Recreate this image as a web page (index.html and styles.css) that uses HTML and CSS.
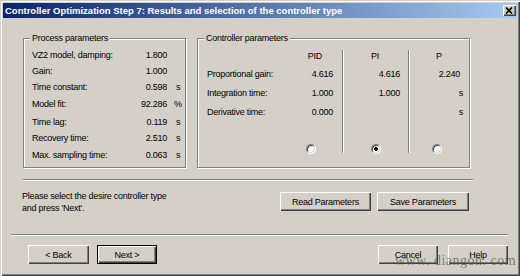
FILE: index.html
```html
<!DOCTYPE html>
<html>
<head>
<meta charset="utf-8">
<link rel="stylesheet" href="styles.css">
</head>
<body>
<div class="window">
  <div class="titlebar">
    <span class="title">Controller Optimization Step 7: Results and selection of the controller type</span>
    <span class="close"><svg width="8" height="7" viewBox="0 0 8 7"><path d="M1 0.5 L7 6.5 M7 0.5 L1 6.5" stroke="#000" stroke-width="1.6"/></svg></span>
  </div>
  <div class="content">
    <div class="groups">
      <div class="group process">
        <span class="group-title">Process parameters</span>
        <div class="pgrid">
          <span>VZ2 model, damping:</span><span class="val">1.800</span><span class="unit"></span>
          <span>Gain:</span><span class="val">1.000</span><span class="unit"></span>
          <span>Time constant:</span><span class="val">0.598</span><span class="unit">s</span>
          <span>Model fit:</span><span class="val">92.286</span><span class="unit">%</span>
          <span>Time lag:</span><span class="val">0.119</span><span class="unit">s</span>
          <span>Recovery time:</span><span class="val">2.510</span><span class="unit">s</span>
          <span>Max. sampling time:</span><span class="val">0.063</span><span class="unit">s</span>
        </div>
      </div>
      <div class="group controller">
        <span class="group-title">Controller parameters</span>
        <div class="cgrid">
          <span class="vsep s1"></span>
          <span class="vsep s2"></span>
          <span class="head c-pid">PID</span>
          <span class="head c-pi">PI</span>
          <span class="head c-p">P</span>

          <span class="lbl r2">Proportional gain:</span>
          <span class="v c-pid r2">4.616</span>
          <span class="v c-pi r2">4.616</span>
          <span class="v c-p r2">2.240</span>

          <span class="lbl r3">Integration time:</span>
          <span class="v c-pid r3">1.000</span>
          <span class="v c-pi r3">1.000</span>
          <span class="v c-p r3 u">s</span>

          <span class="lbl r4">Derivative time:</span>
          <span class="v c-pid r4">0.000</span>
          <span class="v c-p r4 u">s</span>

          <span class="radio c-pid rr"></span>
          <span class="radio checked c-pi rr"></span>
          <span class="radio c-p rr"></span>
        </div>
      </div>
    </div>
    <div class="sep sep1"></div>
    <div class="mid">
      <p class="hint">Please select the desire controller type<br>and press 'Next'.</p>
      <div class="midbtns">
        <button class="btn wide">Read Parameters</button>
        <button class="btn wide2">Save Parameters</button>
      </div>
    </div>
    <div class="sep sep2"></div>
    <div class="nav">
      <button class="btn back">&lt; Back</button>
      <button class="btn next">Next &gt;</button>
      <span class="spacer"></span>
      <button class="btn cancel">Cancel</button>
      <button class="btn help">Help</button>
    </div>
  </div>
  <div class="watermark">www. diangon. com</div>
</div>
</body>
</html>
```
FILE: styles.css
```css
* { box-sizing: border-box; }
body {
  margin: 0;
  background: #d4d0c8;
  font-family: "Liberation Sans", Arial, sans-serif;
  font-size: 9px;
  letter-spacing: -0.25px;
  color: #000;
}
.window {
  position: relative;
  width: 520px;
  height: 276px;
  padding: 3px;
  background: #d4d0c8;
  box-shadow: inset 1px 1px 0 #d4d0c8, inset 2px 2px 0 #fff, inset -1px -1px 0 #404040, inset -2px -2px 0 #808080;
  display: flex;
  flex-direction: column;
}
.titlebar {
  height: 15px;
  background: linear-gradient(to right, #0a246a, #a6caf0);
  display: flex;
  align-items: center;
  justify-content: space-between;
  padding: 0 1px 0 2px;
  color: #fff;
  font-weight: bold;
  font-size: 9.5px;
  letter-spacing: 0;
}
.title { white-space: nowrap; }
.close {
  width: 13px;
  height: 11px;
  background: #d4d0c8;
  box-shadow: inset 1px 1px 0 #fff, inset -1px -1px 0 #404040, inset -2px -2px 0 #808080;
  display: flex;
  align-items: center;
  justify-content: center;
}
.close svg { display: block; margin: -1px 1px 0 0; }
.content {
  flex: 1;
  padding: 20px 0 0 20px;
  display: flex;
  flex-direction: column;
}
.groups {
  display: flex;
  gap: 11px;
  height: 130px;
}
.group {
  height: 130px;
  border: 1px solid #808080;
  box-shadow: inset 1px 1px 0 #fff, 1px 1px 0 #fff;
}
.process { width: 163px; }
.controller { width: 273px; }
.group-title {
  display: block;
  width: max-content;
  margin: -7px 0 0 6px;
  padding: 0 2px;
  line-height: 12px;
  background: #d4d0c8;
}
.pgrid {
  margin-top: 3px;
  padding-left: 8px;
  display: grid;
  grid-template-columns: 1fr 44px 14px;
  grid-template-rows: 15.5px 16px 17px 17.5px 17px 16.5px 17px;
  align-items: center;
  line-height: 12px;
}
.pgrid .val { justify-self: end; padding-right: 4px; }
.pgrid .unit { justify-self: center; }
.cgrid {
  margin-top: 3px;
  padding-left: 9px;
  height: 108px;
  display: grid;
  grid-template-columns: 85px 46px 8px 58px 8px 54px;
  grid-template-rows: 17px 19px 19px 19px 1fr 12px;
  align-items: center;
  line-height: 12px;
}
.c-pid { grid-column: 2; }
.c-pi { grid-column: 4; }
.c-p { grid-column: 6; }
.head { grid-row: 1; justify-self: center; }
.lbl { grid-column: 1; }
.r2 { grid-row: 2; }
.r3 { grid-row: 3; }
.r4 { grid-row: 4; }
.rr { grid-row: 6; }
.v { justify-self: end; }
.v.c-pid { padding-right: 5px; }
.v.c-pi { padding-right: 4px; }
.v.c-p { padding-right: 6px; }
.v.u { padding-right: 3px; }
.vsep {
  grid-row: 1 / -1;
  align-self: stretch;
  justify-self: start;
  width: 2px;
  margin: 3px 0 2px 4px;
  border-left: 1px solid #808080;
  border-right: 1px solid #fff;
}
.s1 { grid-column: 3; }
.s2 { grid-column: 5; }
.radio {
  width: 10px;
  height: 10px;
  border-radius: 50%;
  justify-self: start;
  border: 1px solid;
  border-color: #808080 #fff #fff #808080;
  background: #fff;
  box-shadow: inset 1px 1px 0 #404040, inset -1px -1px 0 #d4d0c8;
}
.radio.checked {
  background: radial-gradient(circle, #000 0, #000 1.6px, #fff 2.2px);
}
.radio.c-pid { margin-left: 14px; }
.radio.c-pi { margin-left: 25px; }
.radio.c-p { margin-left: 20px; }
.sep {
  height: 2px;
  border-top: 1px solid #808080;
  border-bottom: 1px solid #fff;
}
.sep1 { margin-top: 11px; width: 450px; }
.mid {
  margin-top: 11px;
  width: 446px;
  height: 19px;
  display: flex;
  justify-content: space-between;
}
.hint {
  margin: -2px 0 0 -1px;
  line-height: 12px;
}
.midbtns { display: flex; gap: 6px; }
.btn {
  height: 19px;
  padding: 0;
  border: 0;
  background: #d4d0c8;
  font: inherit;
  letter-spacing: inherit;
  color: #000;
  box-shadow: inset 1px 1px 0 #fff, inset -1px -1px 0 #404040, inset -2px -2px 0 #808080;
}
.wide { width: 91px; }
.wide2 { width: 92px; }
.sep2 { margin: 23px 0 0 -12px; width: 497px; }
.nav {
  margin: 9px 0 0 5px;
  width: 480px;
  display: flex;
}
.back { width: 61px; }
.next {
  width: 60px;
  margin-left: 8px;
  box-shadow: inset 0 0 0 1px #000, inset 2px 2px 0 #fff, inset -2px -2px 0 #404040, inset -3px -3px 0 #808080;
}
.spacer { flex: 1; }
.cancel { width: 60px; }
.help { width: 60px; margin-left: 10px; }
.watermark {
  position: absolute;
  left: 395px;
  top: 253px;
  font-family: "Liberation Serif", "Times New Roman", serif;
  font-size: 14px;
  letter-spacing: 0.5px;
  color: rgba(80, 80, 80, 0.7);
  white-space: nowrap;
  pointer-events: none;
}
```
